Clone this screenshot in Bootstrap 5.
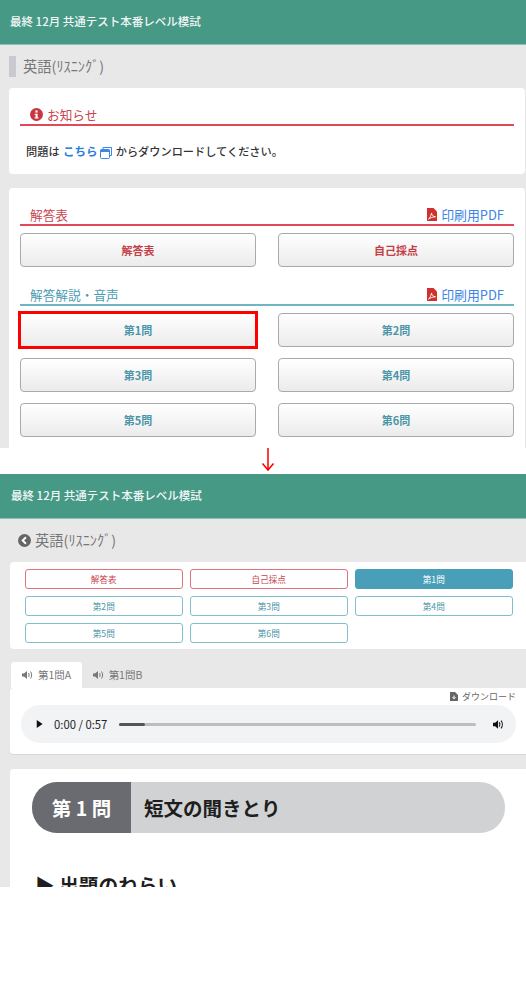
<!doctype html>
<html lang="ja">
<head>
<meta charset="utf-8">
<meta name="viewport" content="width=device-width, initial-scale=1">
<link href="https://cdn.jsdelivr.net/npm/bootstrap@5.3.0/dist/css/bootstrap.min.css" rel="stylesheet">
<style>
html,body{background:#fff;font-family:"Noto Sans CJK JP","Liberation Sans",sans-serif;color:#333}
.shot{background:#e8e8e8;overflow:hidden}
.shot-a{height:448px}
.shot-b{height:413px}
.app-head{height:45px;background:#459985;color:#f2f6f5;font-size:11.5px;font-weight:500;border-bottom:1px solid #8fc0b3;padding-left:10px}
.shot-b .app-head{padding-left:11px}
.page-title{height:21px;margin:11px 0 11px 9px;border-left:7px solid #c9cad0;padding-left:7px;font-size:14.3px;color:#777;line-height:19px}
.sheet{background:#fff;border-radius:4px;margin:0 1px 14px 9px;padding:0 11px}
.sheet-note{height:86px;padding-top:18px}
.sheet-main{height:300px;padding-top:18px}
.rule-head{height:17px;padding:0 10px 1px 10px;font-size:12.7px;line-height:17px;border-bottom:2px solid #de4a55;color:#c8454f;box-sizing:content-box}
.rule-head.blue{border-bottom-color:#6fb5c4;color:#4a9cb1;margin-top:19px}
.note-line{font-size:11.2px;padding:15px 0 0 6px;color:#333;line-height:20px;font-weight:500}
.note-line a{color:#2a7de1;font-weight:700;text-decoration:none;font-size:11.5px;margin:0 1px}
.pdf-link{color:#3d85e6;font-size:12.9px;text-decoration:none}
.pick-grid{display:grid;grid-template-columns:1fr 1fr;column-gap:22px;row-gap:11px;margin-top:7px}
.grad-btn{height:34px;padding:0;font-size:11px;font-weight:700;background:linear-gradient(#fff,#ebebeb);border:1px solid #aaa;border-radius:4px}
.grad-btn.redt{color:#c43d47}
.grad-btn.tealt{color:#4a95a9}
.grad-btn.marked{outline:3px solid #f00;outline-offset:-1.5px;border-radius:0;border-color:transparent}
.arrow-gap{height:26px}
.title-back{height:22px;margin:10px 0 11px 18px;font-size:14.3px;color:#777;line-height:20px}
.sheet-b{background:#fff;border-radius:4px 0 0 4px;margin-left:10px}
.sheet-pick{height:87px;padding:7px 13px 0 14.5px;margin-bottom:13px}
.mini-grid{display:grid;grid-template-columns:1fr 1fr 1fr;column-gap:6.5px;row-gap:7px}
.mini-btn{height:20px;padding:0;font-size:8.6px;line-height:17px;border-radius:3px;background:#fff}
.mini-btn.redm{border:1px solid #dd737c;color:#c8454f}
.mini-btn.tealm{border:1px solid #7fbfce;color:#4a95a9}
.mini-btn.on{background:#489fb7;border:1px solid #489fb7;color:#fff}
.tab-row{height:26px;margin-left:11px;font-size:10.5px;color:#777}
.tab-one{width:71px;background:#fff;border-radius:3px 3px 0 0}
.tab-two{width:71px}
.sheet-audio{height:67px;margin-bottom:14px;border-bottom:1px solid #d8d8d8;padding:0 10px 0 11px}
.dl-line{height:17px;font-size:9px;color:#666}
.audio-pill{height:38px;background:#f1f3f4;border-radius:19px;padding:0 12px 0 15px;font-size:11.3px;color:#222}
.time-text{margin-left:11px}
.track{height:3px;background:#bdbdbd;border-radius:2px;margin:0 17px 0 12px}
.track-done{width:26px;height:3px;background:#555;border-radius:2px}
.sheet-sec{height:130px;padding:13px 21px 0 22px}
.sec-pill{height:51px;border-radius:25px;overflow:hidden;background:#d1d2d4;font-weight:700;font-size:19.5px;color:#1e1e1e}
.sec-num{width:99px;background:#6a6b70;color:#fff}
.sec-name{padding-left:13px}
.sec-sub{font-size:19.7px;font-weight:700;color:#1e1e1e;margin-top:37px;line-height:30px;padding-left:3px}
.down-arrow{margin-left:260px}
</style>
</head>
<body>
<section class="shot shot-a">
  <div class="app-head d-flex align-items-center">最終 12月 共通テスト本番レベル模試</div>
  <div class="page-title">英語(ﾘｽﾆﾝｸﾞ)</div>
  <div class="sheet sheet-note">
    <div class="rule-head d-flex align-items-center gap-1">
      <svg width="13" height="13" viewBox="0 0 16 16" aria-hidden="true"><circle cx="8" cy="8" r="8" fill="#c8363f"/><rect x="6.600" y="3" width="2.800" height="2.600" fill="#fff"/><path d="M5.600 7h3.800v4.600h1.200V13H5.600v-1.400h1.200V8.400H5.600z" fill="#fff"/></svg>
      <span>お知らせ</span>
    </div>
    <div class="note-line">問題は <a href="#">こちら
      <svg width="12" height="12" viewBox="0 0 12 12" aria-hidden="true"><path d="M3 .5h8.500v8H9.500M3 .5v2" fill="none" stroke="#3d85e6"/><rect x=".5" y="2.500" width="9" height="9" rx="1" fill="#fff" stroke="#3d85e6"/><rect x=".5" y="2.500" width="9" height="2.500" fill="#3d85e6"/></svg></a> からダウンロードしてください。</div>
  </div>
  <div class="sheet sheet-main">
    <div class="rule-head d-flex justify-content-between align-items-center">
      <span>解答表</span>
      <a class="pdf-link d-flex align-items-center gap-1" href="#"><svg width="10" height="13" viewBox="0 0 10 13" aria-hidden="true"><path d="M0 0h6.500L10 3.500V13H0z" fill="#d0312d"/><path d="M1.500 11c1.500-1 2.500-3 3-6 .5 2.500 1.500 3.500 4 3.800-2.500 0-5 1-7 2.200z" fill="none" stroke="#fff" stroke-width=".9"/></svg>印刷用PDF</a>
    </div>
    <div class="pick-grid">
      <button class="btn grad-btn redt" type="button">解答表</button>
      <button class="btn grad-btn redt" type="button">自己採点</button>
    </div>
    <div class="rule-head blue d-flex justify-content-between align-items-center">
      <span>解答解説・音声</span>
      <a class="pdf-link d-flex align-items-center gap-1" href="#"><svg width="10" height="13" viewBox="0 0 10 13" aria-hidden="true"><path d="M0 0h6.500L10 3.500V13H0z" fill="#d0312d"/><path d="M1.500 11c1.500-1 2.500-3 3-6 .5 2.500 1.500 3.500 4 3.800-2.500 0-5 1-7 2.200z" fill="none" stroke="#fff" stroke-width=".9"/></svg>印刷用PDF</a>
    </div>
    <div class="pick-grid">
      <button class="btn grad-btn tealt marked" type="button">第1問</button>
      <button class="btn grad-btn tealt" type="button">第2問</button>
      <button class="btn grad-btn tealt" type="button">第3問</button>
      <button class="btn grad-btn tealt" type="button">第4問</button>
      <button class="btn grad-btn tealt" type="button">第5問</button>
      <button class="btn grad-btn tealt" type="button">第6問</button>
    </div>
  </div>
</section>
<div class="arrow-gap">
  <svg class="down-arrow d-block" width="16" height="24" viewBox="0 0 16 24" aria-hidden="true"><path d="M8 0v22M2.500 15.500 8 22l5.500-6.500" fill="none" stroke="#f00" stroke-width="1.500"/></svg>
</div>
<section class="shot shot-b">
  <div class="app-head d-flex align-items-center">最終 12月 共通テスト本番レベル模試</div>
  <div class="title-back d-flex align-items-center gap-1">
    <svg width="13" height="13" viewBox="0 0 16 16" aria-hidden="true"><circle cx="8" cy="8" r="8" fill="#666"/><path d="M9.800 4 5.800 8l4 4" fill="none" stroke="#fff" stroke-width="2.400"/></svg>
    <span>英語(ﾘｽﾆﾝｸﾞ)</span>
  </div>
  <div class="sheet-b sheet-pick">
    <div class="mini-grid">
      <button class="btn mini-btn redm" type="button">解答表</button>
      <button class="btn mini-btn redm" type="button">自己採点</button>
      <button class="btn mini-btn on" type="button">第1問</button>
      <button class="btn mini-btn tealm" type="button">第2問</button>
      <button class="btn mini-btn tealm" type="button">第3問</button>
      <button class="btn mini-btn tealm" type="button">第4問</button>
      <button class="btn mini-btn tealm" type="button">第5問</button>
      <button class="btn mini-btn tealm" type="button">第6問</button>
    </div>
  </div>
  <div class="tab-row d-flex">
    <div class="tab-one d-flex align-items-center justify-content-center gap-1">
      <svg width="12" height="10" viewBox="0 0 12 10" aria-hidden="true"><path d="M0 3.500h2L5 1v8L2 6.500H0z" fill="#777"/><path d="M6.500 3c.8 1 .8 3 0 4M8.500 1.500c1.500 2 1.500 5 0 7" fill="none" stroke="#777"/></svg>
      <span>第1問A</span>
    </div>
    <div class="tab-two d-flex align-items-center justify-content-center gap-1">
      <svg width="12" height="10" viewBox="0 0 12 10" aria-hidden="true"><path d="M0 3.500h2L5 1v8L2 6.500H0z" fill="#777"/><path d="M6.500 3c.8 1 .8 3 0 4M8.500 1.500c1.500 2 1.500 5 0 7" fill="none" stroke="#777"/></svg>
      <span>第1問B</span>
    </div>
  </div>
  <div class="sheet-b sheet-audio">
    <div class="dl-line d-flex justify-content-end align-items-center gap-1">
      <svg width="8" height="9" viewBox="0 0 8 9" aria-hidden="true"><path d="M0 0h5l3 3v6H0z" fill="#666"/><path d="M4 3.500v3M2.500 5.200 4 6.800l1.500-1.600" fill="none" stroke="#fff"/></svg>
      <span>ダウンロード</span>
    </div>
    <div class="audio-pill d-flex align-items-center">
      <svg width="7" height="8" viewBox="0 0 9 10" aria-hidden="true"><path d="M1 0l7.500 5L1 10z" fill="#111"/></svg>
      <span class="time-text">0:00 / 0:57</span>
      <div class="track flex-grow-1"><div class="track-done"></div></div>
      <svg width="11" height="11" viewBox="0 0 13 12" aria-hidden="true"><path d="M0 4h2.500L6 1v10L2.500 8H0z" fill="#111"/><path d="M7.500 3.500c1 1.500 1 3.500 0 5M9.500 1.500c2 2.500 2 6.500 0 9" fill="none" stroke="#111" stroke-width="1.300"/></svg>
    </div>
  </div>
  <div class="sheet-b sheet-sec">
    <div class="sec-pill d-flex align-items-stretch">
      <div class="sec-num d-flex align-items-center justify-content-center">第 1 問</div>
      <div class="sec-name d-flex align-items-center">短文の聞きとり</div>
    </div>
    <div class="sec-sub">▶ 出題のねらい</div>
  </div>
</section>
<script src="https://cdn.jsdelivr.net/npm/bootstrap@5.3.0/dist/js/bootstrap.bundle.min.js"></script>
</body>
</html>
